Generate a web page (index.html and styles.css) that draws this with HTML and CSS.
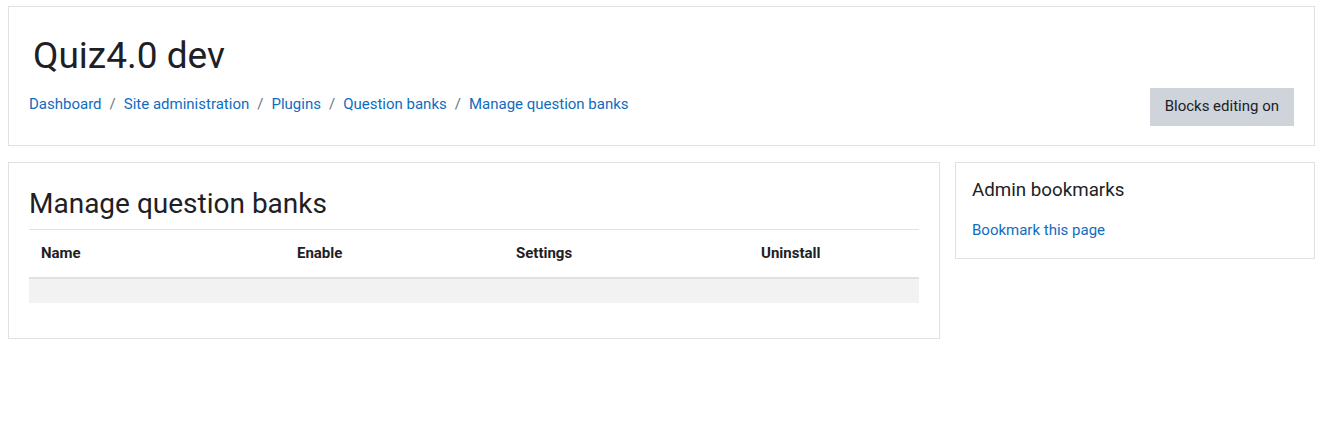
FILE: index.html
```html
<!DOCTYPE html>
<html lang="en">
<head>
    <meta charset="UTF-8">
    <meta name="viewport" content="width=device-width, initial-scale=1.0">
    <title>Manage question banks</title>
    <link rel="stylesheet" href="styles.css">
</head>
<body>
    <div class="page">
        <header class="page-header">
            <h1>Quiz4.0 dev</h1>
            <div class="header-bar">
                <nav class="breadcrumb">
                    <a href="#">Dashboard</a>
                    <span class="sep">/</span>
                    <a href="#">Site administration</a>
                    <span class="sep">/</span>
                    <a href="#">Plugins</a>
                    <span class="sep">/</span>
                    <a href="#">Question banks</a>
                    <span class="sep">/</span>
                    <a href="#">Manage question banks</a>
                </nav>
                <button type="button" class="btn-edit">Blocks editing on</button>
            </div>
        </header>

        <div class="content">
            <main class="card main-card">
                <h2>Manage question banks</h2>
                <table class="generaltable">
                    <thead>
                        <tr>
                            <th class="col-name">Name</th>
                            <th class="col-enable">Enable</th>
                            <th class="col-settings">Settings</th>
                            <th class="col-uninstall">Uninstall</th>
                        </tr>
                    </thead>
                    <tbody>
                        <tr>
                            <td></td>
                            <td></td>
                            <td></td>
                            <td></td>
                        </tr>
                    </tbody>
                </table>
            </main>

            <aside class="card block">
                <h5>Admin bookmarks</h5>
                <a href="#">Bookmark this page</a>
            </aside>
        </div>
    </div>
</body>
</html>
```

FILE: styles.css
```css
body {
    font-family: Roboto, "Liberation Sans", sans-serif;
    font-size: 15px;
    line-height: 1.5;
    color: #1d2125;
    margin: 0;
    background-color: #fff;
}

a {
    color: #0f6cbf;
    text-decoration: none;
}

.page {
    padding: 6px 6px 0 8px;
}

.card {
    border: 1px solid #dee2e6;
    background-color: #fff;
}

/* page header */
.page-header {
    border: 1px solid #dee2e6;
    padding: 20px 20px 19px 20px;
    margin-bottom: 16px;
}

.page-header h1 {
    font-size: 37px;
    font-weight: 400;
    line-height: 1.2;
    margin: 7px 0 10px 4px;
}

.header-bar {
    display: flex;
    justify-content: space-between;
    align-items: flex-end;
}

.breadcrumb {
    display: flex;
    align-items: center;
    margin-bottom: 10px;
}

.breadcrumb .sep {
    color: #6a737b;
    padding: 0 8px;
}

.btn-edit {
    font-family: inherit;
    font-size: 15px;
    line-height: 1.5;
    color: #1d2125;
    background-color: #ced4da;
    border: 1px solid #ced4da;
    border-radius: 0;
    padding: 6px 14px 7px 14px;
    cursor: pointer;
}

/* main content */
.content {
    display: flex;
    gap: 15px;
    align-items: flex-start;
}

.main-card {
    flex: 1;
    padding: 20px 20px 35px 20px;
}

.main-card h2 {
    font-size: 28px;
    font-weight: 400;
    line-height: 1.2;
    margin: 4px 0 9px 0;
}

.generaltable {
    width: 100%;
    border-collapse: collapse;
}

.generaltable th {
    text-align: left;
    font-weight: 700;
    padding: 12px;
    border-top: 1px solid #dee2e6;
    border-bottom: 2px solid #dee2e6;
    vertical-align: bottom;
}

.generaltable td {
    padding: 12px;
    background-color: #f2f2f2;
}

.col-name { width: 232px; }
.col-enable { width: 195px; }
.col-settings { width: 221px; }

.block {
    width: 360px;
    box-sizing: border-box;
    padding: 16px 16px 16px 16px;
}

.block h5 {
    font-size: 18.75px;
    font-weight: 400;
    line-height: 1.2;
    margin: 0 0 18px 0;
}

.block a {
    display: block;
}
```
